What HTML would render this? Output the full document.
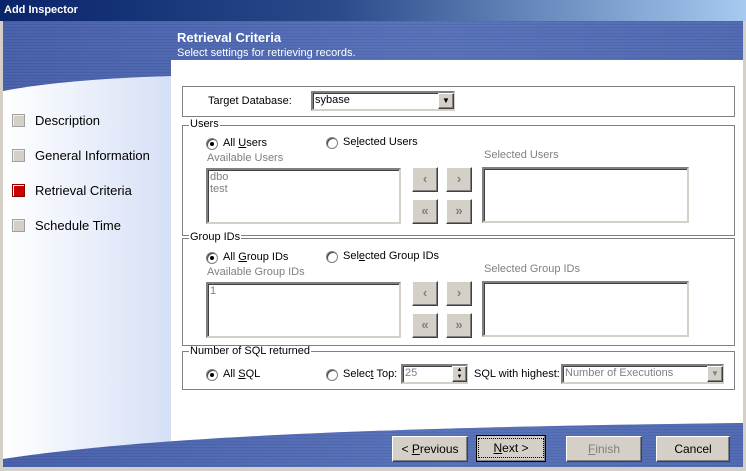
<!DOCTYPE html>
<html><head><style>
*{margin:0;padding:0;box-sizing:border-box}
body{width:746px;height:471px;overflow:hidden;background:#d4d0c8;font-family:"Liberation Sans",Arial,sans-serif;font-size:11px;color:#000;position:relative}
.a{position:absolute}
.title{left:0;top:0;width:746px;height:21px;background:linear-gradient(90deg,#0a246a,#2a4a8a 45%,#a6caf0);color:#fff;font-weight:bold;font-size:11px;line-height:21px;padding-left:4px}
.client{left:3px;top:21px;width:740px;height:446px;background:#fff;overflow:hidden}
.gb{border:1px solid #808080;box-shadow:1px 1px 0 #fff inset}
.leg{background:#fff;padding:0 1px;line-height:11px}
.lb{background:#fff;border:2px solid;border-color:#808080 #d4d0c8 #d4d0c8 #808080;box-shadow:inset 1px 1px 0 #404040;color:#808080;padding:1px 2px;line-height:12px}
.btn{background:#d4d0c8;border:1px solid;border-color:#fff #404040 #404040 #fff;box-shadow:inset -1px -1px 0 #808080;text-align:center;color:#808080;font-size:13px;line-height:22px;font-weight:bold}
.pb{background:#d4d0c8;border:1px solid;border-color:#fff #404040 #404040 #fff;box-shadow:inset -1px -1px 0 #808080;text-align:center;font-size:12px;line-height:21px}
.gray{color:#808080}
.rad{width:12px;height:12px;border-radius:50%;border:1px solid #808080;background:#fff;box-shadow:inset 1px 1px 0 #404040}
.dot::after{content:"";position:absolute;left:3px;top:3px;width:4px;height:4px;border-radius:50%;background:#000}
.sq{width:13px;height:13px;background:#d4d0c8;border:1px solid #a0a0a0;box-shadow:inset 1px 1px 0 #eee}
.nav{font-size:13px;color:#000}
</style></head><body>
<div class="a title">Add Inspector</div>
<div class="a client">
 <div class="a" style="left:0;top:0;width:168px;height:446px;background:linear-gradient(90deg,#fff 0%,#eef2fb 40%,#d6e0f6 100%)"></div>
 <svg class="a" style="left:0;top:0" width="740" height="446">
  <defs><pattern id="st" width="4" height="3" patternUnits="userSpaceOnUse"><rect width="4" height="3" fill="#5a72b8"/><rect width="4" height="1" fill="#4a62a8"/></pattern>
  <linearGradient id="hg" x1="0" x2="1"><stop offset="0" stop-color="#3f56a0"/><stop offset=".6" stop-color="#5a74ba"/><stop offset="1" stop-color="#4d66ad"/></linearGradient></defs>
  <path d="M0 0H740V39H168V55C100 57 40 62 0 70Z" fill="url(#hg)"/>
  <path d="M0 0H740V39H168V55C100 57 40 62 0 70Z" fill="url(#st)" opacity=".45"/>
  <path d="M0 446V438C150 415 400 406 740 402V446Z" fill="url(#hg)"/>
  <path d="M0 446V438C150 415 400 406 740 402V446Z" fill="url(#st)" opacity=".45"/>
 </svg>
 <div class="a" style="left:174px;top:9px;color:#fff;font-weight:bold;font-size:13px">Retrieval Criteria</div>
 <div class="a" style="left:174px;top:26px;color:#fff;font-size:11px">Select settings for retrieving records.</div>

 <div class="a sq" style="left:9px;top:93px"></div><div class="a nav" style="left:32px;top:92px">Description</div>
 <div class="a sq" style="left:9px;top:128px"></div><div class="a nav" style="left:32px;top:127px">General Information</div>
 <div class="a sq" style="left:9px;top:163px;background:#c00;border-color:#800"></div><div class="a nav" style="left:32px;top:162px">Retrieval Criteria</div>
 <div class="a sq" style="left:9px;top:198px"></div><div class="a nav" style="left:32px;top:197px">Schedule Time</div>
</div>

<div class="a gb" style="left:182px;top:86px;width:553px;height:31px;background:#fff"></div>
<div class="a" style="left:208px;top:95px">Target Database:</div>
<div class="a lb" style="left:311px;top:91px;width:144px;height:20px;color:#000">sybase</div>
<div class="a btn" style="left:438px;top:93px;width:16px;height:16px;line-height:14px;color:#000;font-size:8px">▼</div>

<div class="a gb" style="left:182px;top:125px;width:553px;height:111px"></div>
<div class="a leg" style="left:189px;top:119px">Users</div>
<div class="a rad dot" style="left:206px;top:138px"></div><div class="a" style="left:223px;top:137px">All <u>U</u>sers</div>
<div class="a rad" style="left:326px;top:137px"></div><div class="a" style="left:343px;top:136px">Se<u>l</u>ected Users</div>
<div class="a gray" style="left:207px;top:152px">Available Users</div>
<div class="a gray" style="left:484px;top:149px">Selected Users</div>
<div class="a lb" style="left:206px;top:168px;width:195px;height:56px">dbo<br>test</div>
<div class="a lb" style="left:482px;top:167px;width:207px;height:56px"></div>
<div class="a btn" style="left:412px;top:167px;width:26px;height:25px">‹</div>
<div class="a btn" style="left:446px;top:167px;width:26px;height:25px">›</div>
<div class="a btn" style="left:412px;top:199px;width:26px;height:25px">«</div>
<div class="a btn" style="left:446px;top:199px;width:26px;height:25px">»</div>

<div class="a gb" style="left:182px;top:238px;width:553px;height:108px"></div>
<div class="a leg" style="left:189px;top:232px">Group IDs</div>
<div class="a rad dot" style="left:206px;top:252px"></div><div class="a" style="left:223px;top:251px">All <u>G</u>roup IDs</div>
<div class="a rad" style="left:326px;top:251px"></div><div class="a" style="left:343px;top:250px">Sel<u>e</u>cted Group IDs</div>
<div class="a gray" style="left:207px;top:266px">Available Group IDs</div>
<div class="a gray" style="left:484px;top:263px">Selected Group IDs</div>
<div class="a lb" style="left:206px;top:282px;width:195px;height:56px">1</div>
<div class="a lb" style="left:482px;top:281px;width:207px;height:56px"></div>
<div class="a btn" style="left:412px;top:281px;width:26px;height:25px">‹</div>
<div class="a btn" style="left:446px;top:281px;width:26px;height:25px">›</div>
<div class="a btn" style="left:412px;top:313px;width:26px;height:25px">«</div>
<div class="a btn" style="left:446px;top:313px;width:26px;height:25px">»</div>

<div class="a gb" style="left:182px;top:351px;width:553px;height:39px"></div>
<div class="a leg" style="left:189px;top:346px">Number of SQL returned</div>
<div class="a rad dot" style="left:206px;top:369px"></div><div class="a" style="left:223px;top:368px">All <u>S</u>QL</div>
<div class="a rad" style="left:326px;top:369px"></div><div class="a" style="left:343px;top:368px">Selec<u>t</u> Top:</div>
<div class="a lb" style="left:401px;top:364px;width:67px;height:20px">25</div>
<div class="a btn" style="left:452px;top:366px;width:15px;height:16px;font-size:6px;line-height:7px;color:#000">▲<br>▼</div>
<div class="a" style="left:474px;top:368px">SQL with highest:</div>
<div class="a lb" style="left:561px;top:364px;width:163px;height:20px">Number of Executions</div>
<div class="a btn" style="left:707px;top:366px;width:16px;height:16px;font-size:8px;line-height:14px">▼</div>

<div class="a pb" style="left:392px;top:436px;width:76px;height:26px;line-height:24px">&lt; <u>P</u>revious</div>
<div class="a pb" style="left:476px;top:435px;width:70px;height:27px;border:1px solid #000;line-height:25px"><span style="border:1px dotted #000;padding:2px 14px"><u>N</u>ext &gt;</span></div>
<div class="a pb" style="left:566px;top:436px;width:76px;height:26px;line-height:24px;color:#808080"><u>F</u>inish</div>
<div class="a pb" style="left:656px;top:436px;width:74px;height:26px;line-height:24px">Cancel</div>
</body></html>
